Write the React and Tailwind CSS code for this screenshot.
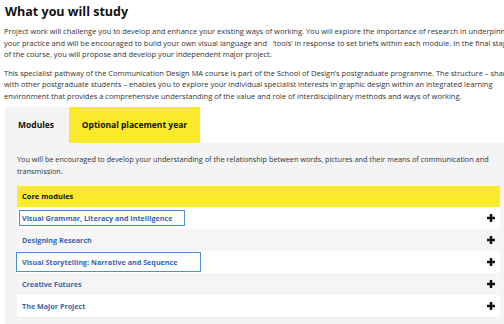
import React from 'react';

const modules = [
    { title: 'Visual Grammar, Literacy and Intelligence', box: 'ml-[2px] pl-[2px] pr-[12px] py-[2px] border border-[#4a8fd8]' },
    { title: 'Designing Research', box: 'pl-[5px]' },
    { title: 'Visual Storytelling: Narrative and Sequence', box: '-ml-[1px] pl-[5px] pr-[22px] py-[4px] border border-[#4a8fd8]' },
    { title: 'Creative Futures', box: 'pl-[5px]' },
    { title: 'The Major Project', box: 'pl-[5px]' },
];

function PlusIcon() {
    return (
        <svg width="8" height="8" viewBox="0 0 9 9" className="shrink-0">
            <path d="M3.1 0h2.8v3.1H9v2.8H5.9V9H3.1V5.9H0V3.1h3.1z" fill="#111" />
        </svg>
    );
}

export default function App() {
    return (
        <div className="w-[504px] h-[324px] overflow-hidden bg-white text-[#333] font-['Open_Sans',sans-serif]">
            <h2 className="pl-[5px] pt-[4px] text-[12.5px] leading-[16px] font-bold text-[#111]">What you will study</h2>

            {/* intro */}
            <div className="mt-[6px] pl-[4px] text-[7.5px] leading-[11.5px] whitespace-nowrap">
                <p>Project work will challenge you to develop and enhance your existing ways of working. You will explore the importance of research in underpinning</p>
                <p>your practice and will be encouraged to build your own visual language and &nbsp;&nbsp;‘tools’ in response to set briefs within each module. In the final stage</p>
                <p>of the course, you will propose and develop your independent major project.</p>
                <p className="mt-[7px]">This specialist pathway of the Communication Design MA course is part of the School of Design’s postgraduate programme. The structure – shared</p>
                <p>with other postgraduate students – enables you to explore your individual specialist interests in graphic design within an integrated learning</p>
                <p>environment that provides a comprehensive understanding of the value and role of interdisciplinary methods and ways of working.</p>
            </div>

            {/* tabs */}
            <div className="mt-[5px] ml-[5px]">
                <div className="flex h-[36px]">
                    <div className="w-[64px] bg-[#f4f4f4] flex items-center pl-[13px] text-[8.5px] font-bold text-[#111]">Modules</div>
                    <div className="w-[131px] bg-[#fbe92c] flex items-center justify-center text-[8.5px] font-bold text-[#111]">Optional placement year</div>
                </div>
                <div className="bg-[#f4f4f4] pt-[11px] pl-[12px] pr-[4px] pb-[10px]">
                    <p className="text-[7.3px] leading-[11.5px]">You will be encouraged to develop your understanding of the relationship between words, pictures and their means of communication and transmission.</p>
                    <div className="mt-[9px] h-[21px] bg-[#fbe92c] flex items-center pl-[5px] text-[7.5px] font-bold text-[#111]">Core modules</div>
                    {modules.map((m, i) => (
                        <div
                            key={m.title}
                            className={`h-[22px] flex items-center justify-between pr-[5px] ${i % 2 === 0 ? 'bg-white' : 'bg-[#f5f5f5]'}`}
                        >
                            <span className={`text-[7.2px] leading-[10px] font-bold text-[#3865ad] ${m.box}`}>
                                {m.title}
                            </span>
                            <PlusIcon />
                        </div>
                    ))}
                    <div className="h-px bg-[#ececec]" />
                </div>
            </div>
        </div>
    );
}
